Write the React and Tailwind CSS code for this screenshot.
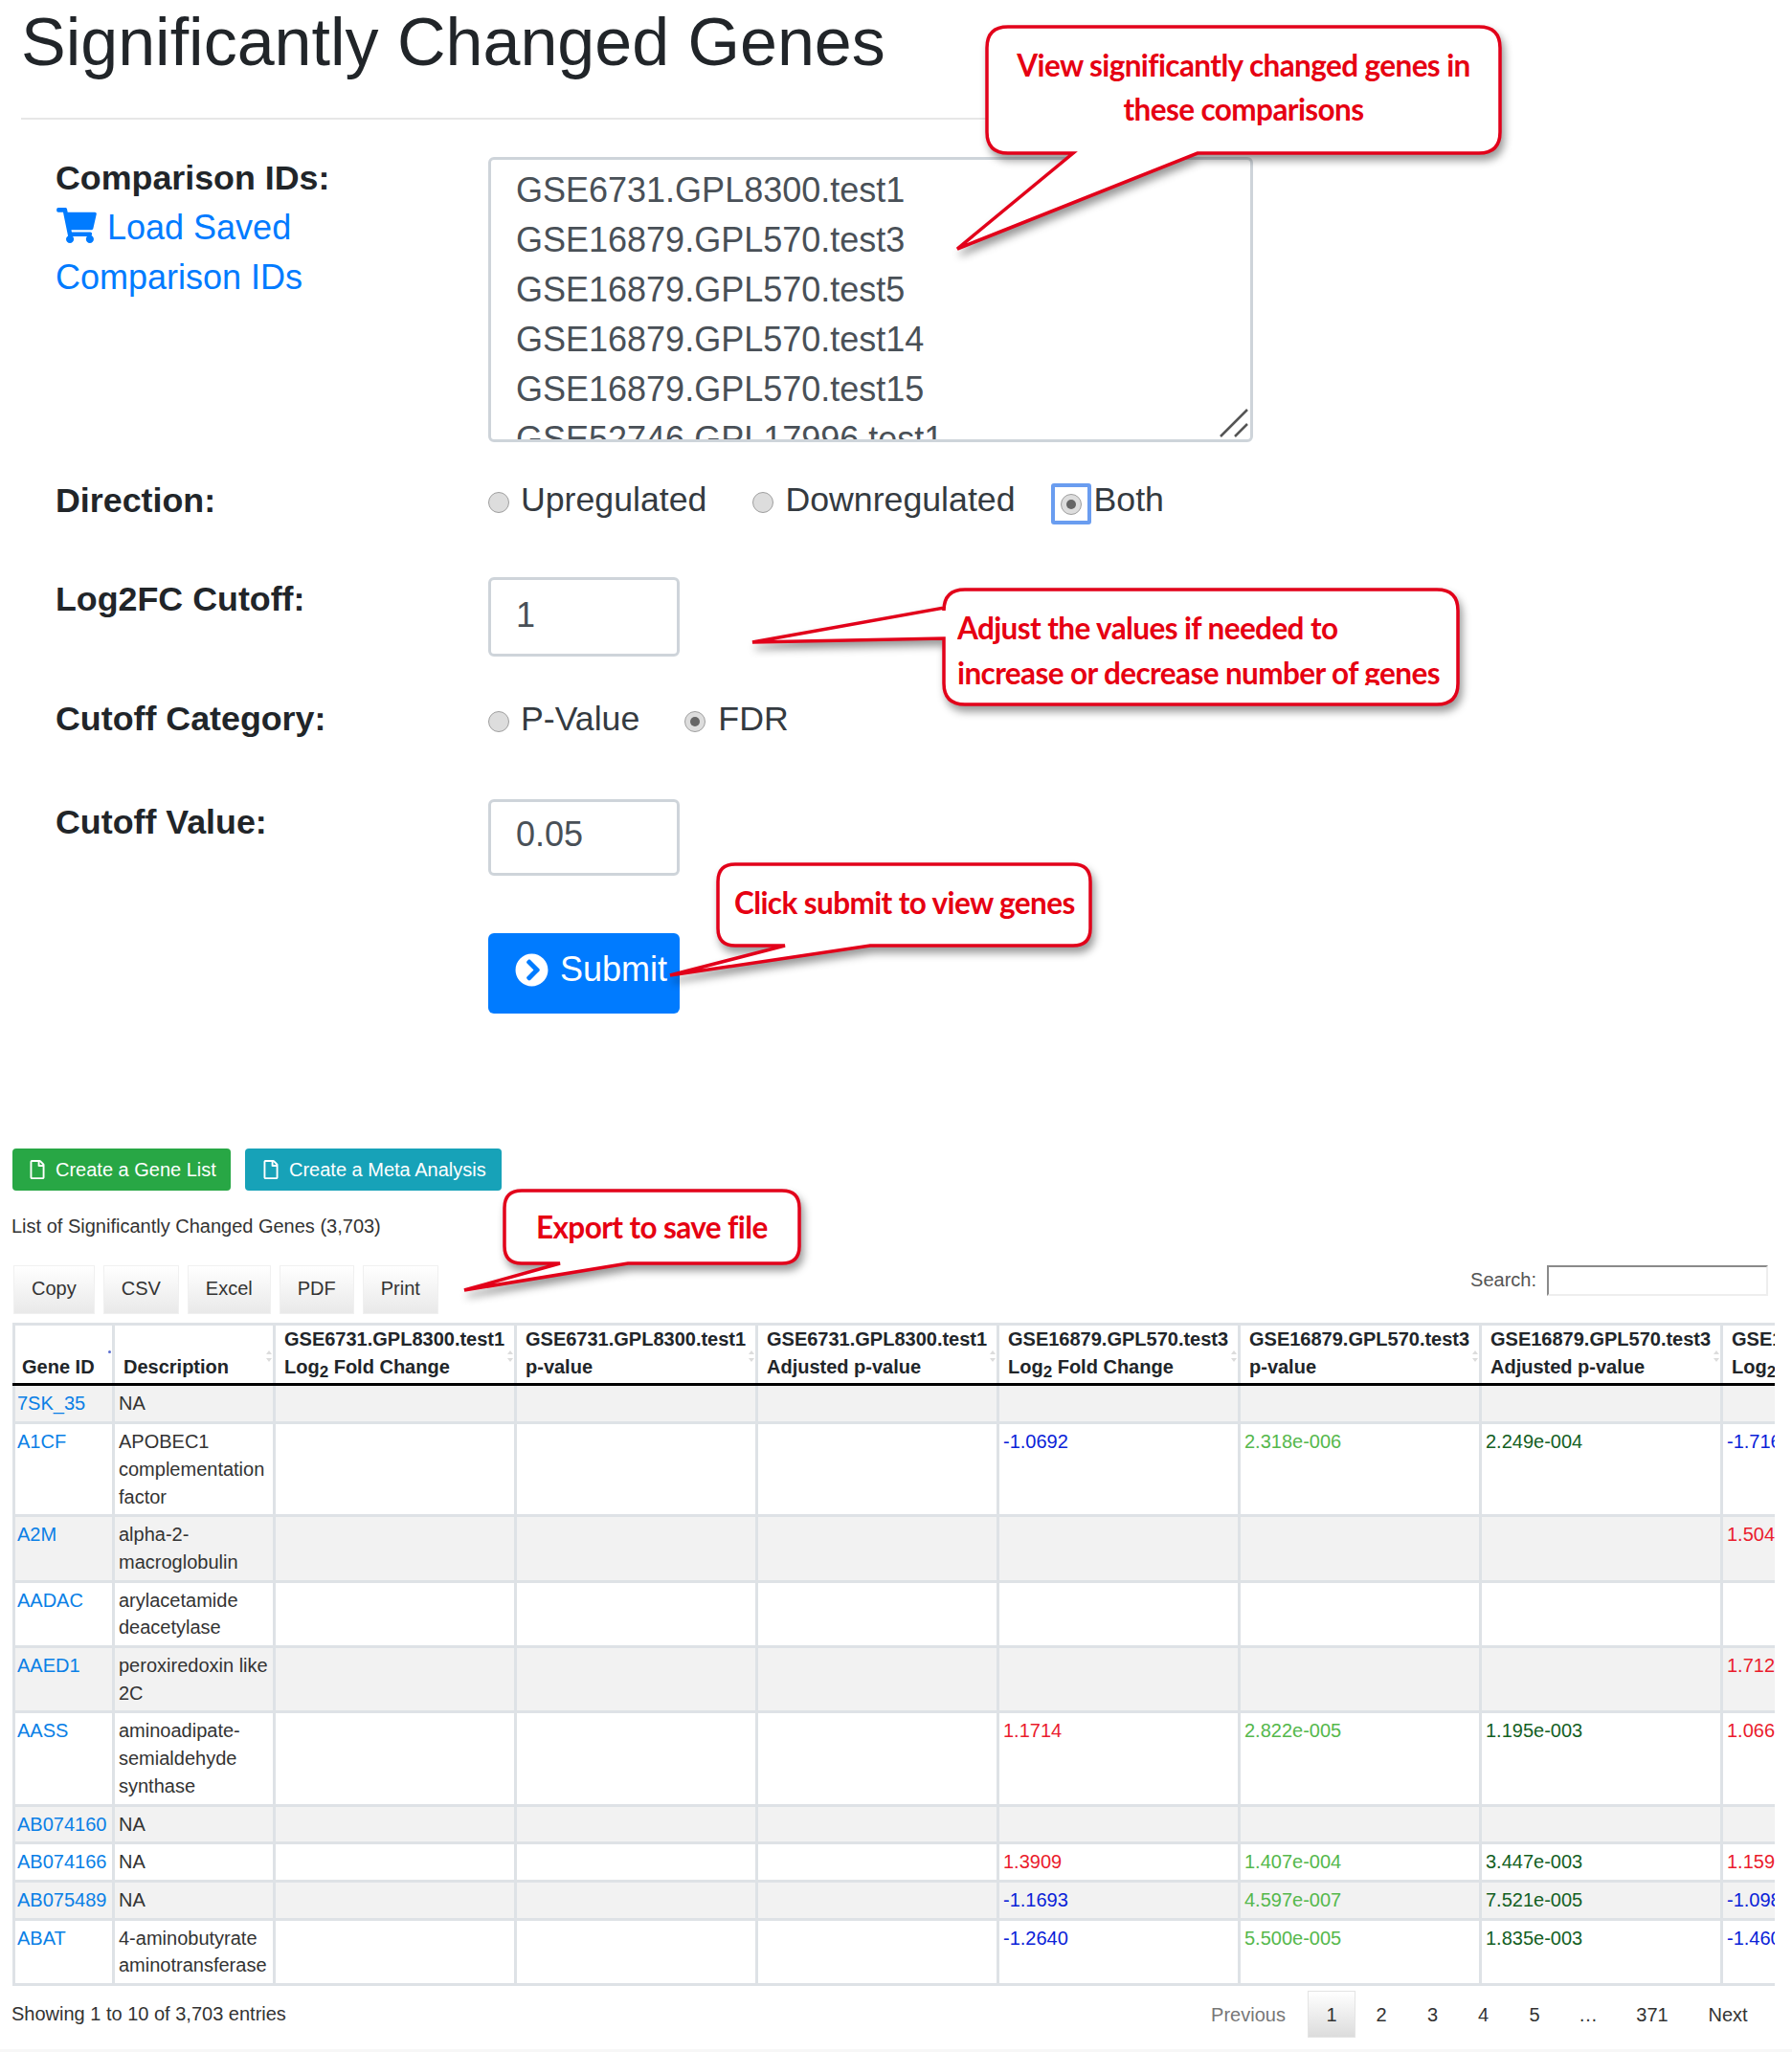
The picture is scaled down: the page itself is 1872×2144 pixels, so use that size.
import { FaShoppingCart, FaChevronCircleRight, FaRegFile } from 'react-icons/fa';

const comparisonIds = [
  'GSE6731.GPL8300.test1',
  'GSE16879.GPL570.test3',
  'GSE16879.GPL570.test5',
  'GSE16879.GPL570.test14',
  'GSE16879.GPL570.test15',
  'GSE52746.GPL17996.test1',
];

const BLUE = 'text-[#0a22d8]';
const RED = 'text-[#ea1c2c]';
const LIGHT = 'text-[#55b84c]';
const DARK = 'text-[#13601f]';

// logFC columns are coloured by direction
const fc = (value) => ({ value, color: value.startsWith('-') ? BLUE : RED });

const rows = [
  { id: '7SK_35', desc: 'NA' },
  { id: 'A1CF', desc: 'APOBEC1 complementation factor', lfc: fc('-1.0692'), p: '2.318e-006', adj: '2.249e-004', next: fc('-1.7160') },
  { id: 'A2M', desc: 'alpha-2-macroglobulin', next: fc('1.5042') },
  { id: 'AADAC', desc: 'arylacetamide deacetylase' },
  { id: 'AAED1', desc: 'peroxiredoxin like 2C', next: fc('1.7120') },
  { id: 'AASS', desc: 'aminoadipate-semialdehyde synthase', lfc: fc('1.1714'), p: '2.822e-005', adj: '1.195e-003', next: fc('1.0663') },
  { id: 'AB074160', desc: 'NA' },
  { id: 'AB074166', desc: 'NA', lfc: fc('1.3909'), p: '1.407e-004', adj: '3.447e-003', next: fc('1.1590') },
  { id: 'AB075489', desc: 'NA', lfc: fc('-1.1693'), p: '4.597e-007', adj: '7.521e-005', next: fc('-1.0981') },
  { id: 'ABAT', desc: '4-aminobutyrate aminotransferase', lfc: fc('-1.2640'), p: '5.500e-005', adj: '1.835e-003', next: fc('-1.4602') },
];

const columns = [
  ['GSE6731.GPL8300.test1', 'fold'],
  ['GSE6731.GPL8300.test1', 'p-value'],
  ['GSE6731.GPL8300.test1', 'Adjusted p-value'],
  ['GSE16879.GPL570.test3', 'fold'],
  ['GSE16879.GPL570.test3', 'p-value'],
  ['GSE16879.GPL570.test3', 'Adjusted p-value'],
  ['GSE16879.GPL570.test5', 'fold'],
];

const bubbleBottom = (l, t, r, b, a1, a2, tx, ty, rad = 22) =>
  `M${l + rad} ${t}H${r - rad}Q${r} ${t} ${r} ${t + rad}V${b - rad}Q${r} ${b} ${r - rad} ${b}H${a2}L${tx} ${ty}L${a1} ${b}H${l + rad}Q${l} ${b} ${l} ${b - rad}V${t + rad}Q${l} ${t} ${l + rad} ${t}Z`;

const bubbleLeft = (l, t, r, b, a1, a2, tx, ty, rad = 22) =>
  `M${l + rad} ${t}H${r - rad}Q${r} ${t} ${r} ${t + rad}V${b - rad}Q${r} ${b} ${r - rad} ${b}H${l + rad}Q${l} ${b} ${l} ${b - rad}V${a2}L${tx} ${ty}L${l} ${a1}V${t + rad}Q${l} ${t} ${l + rad} ${t}Z`;

function Callout({ className, viewBox, d, children }) {
  return (
    <div className={`absolute ${className}`}>
      <svg viewBox={viewBox} className="block w-full h-full overflow-visible drop-shadow-[3px_6px_4px_rgba(0,0,0,0.4)]">
        <path d={d} fill="#fff" stroke="#e2001a" strokeWidth="3.5" strokeLinejoin="miter" />
      </svg>
      {children}
    </div>
  );
}

function Radio({ checked }) {
  return (
    <span className="w-[22px] h-[22px] shrink-0 rounded-full border border-[#9f9f9f] bg-[#dddddd] flex items-center justify-center">
      {checked && <span className="w-[10px] h-[10px] rounded-full bg-[#666]" />}
    </span>
  );
}

function RadioSlot({ checked }) {
  return (
    <span className="mt-[14px]">
      <Radio checked={checked} />
    </span>
  );
}

function Label({ children, className = '' }) {
  return <div className={`font-bold text-[#212529] text-[35.8px] leading-[44px] ${className}`}>{children}</div>;
}

function SortMark() {
  return (
    <svg width="6" height="12" viewBox="0 0 6 12" className="absolute right-[1px] top-[26px]">
      <path d="M3 0L6 4H0Z M3 12L0 8H6Z" fill="#dcdcdc" />
    </svg>
  );
}

function Cell({ children, className = '', pad = 'pl-[4px]' }) {
  return <td className={`border-[3px] border-[#dee2e6] pr-[3px] py-[4px] align-top ${pad} ${className}`}>{children}</td>;
}

export default function App() {
  return (
    <main className="relative flex flex-col h-[2144px] overflow-hidden bg-white font-['Liberation_Sans',Arial,sans-serif] text-[#212529]">
      <h1 className="pl-[22px] h-[88px] text-[70px] leading-[88px] font-normal whitespace-nowrap">Significantly Changed Genes</h1>
      <div className="ml-[22px] mt-[35px] w-[1100px] h-[2px] bg-[#e7e7e7]" />

      {/* Search form */}
      <section className="mt-[39px] flex flex-col">
        <div className="flex">
          <div className="w-[510px] pl-[58px]">
            <Label>Comparison IDs:</Label>
            <div className="mt-[4px] w-[280px] text-[#007bff] text-[36px] leading-[52px]">
              <FaShoppingCart className="inline-block w-[42px] h-[37px] ml-[1px] mr-[11px] align-[-4px]" />
              Load Saved Comparison IDs
            </div>
          </div>
          <div className="relative w-[799px] h-[298px]">
            <textarea
              readOnly
              value={comparisonIds.join('\n')}
              className="block w-full h-full resize-none overflow-hidden rounded-md border-[3px] border-[#ced4da] pl-[26px] pt-[6px] text-[36px] leading-[52px] text-[#495057] outline-none"
            />
            <svg width="34" height="34" viewBox="0 0 34 34" className="absolute right-[3px] bottom-[3px]">
              <path d="M3 31L31 3M18 31L31 18" stroke="#555" strokeWidth="2.5" fill="none" />
            </svg>
          </div>
        </div>

        <div className="flex mt-[38px] h-[44px]">
          <Label className="w-[510px] pl-[58px] pt-[1px]">Direction:</Label>
          <div className="flex text-[35.7px] leading-[44px] text-[#343a40]">
            <span className="flex gap-[12px] mr-[48px]"><RadioSlot />Upregulated</span>
            <span className="flex gap-[12px] mr-[37px]"><RadioSlot />Downregulated</span>
            <span className="flex gap-[3px] items-start">
              <span className="w-[42px] h-[43px] mt-[5px] rounded-[3px] border-[4px] border-[#6a9df0] flex items-center justify-center">
                <Radio checked />
              </span>
              Both
            </span>
          </div>
        </div>

        <div className="flex mt-[59px] h-[83px]">
          <Label className="w-[510px] pl-[58px] pt-[1px]">Log2FC Cutoff:</Label>
          <input readOnly value="1" className="w-[200px] h-[83px] rounded-md border-[3px] border-[#ced4da] pl-[26px] pb-[4px] text-[36px] text-[#495057] outline-none" />
        </div>

        <div className="flex mt-[43px] h-[44px]">
          <Label className="w-[510px] pl-[58px]">Cutoff Category:</Label>
          <div className="flex text-[35.7px] leading-[44px] text-[#343a40]">
            <span className="flex gap-[12px] mr-[47px]"><RadioSlot />P-Value</span>
            <span className="flex gap-[13px]"><RadioSlot checked />FDR</span>
          </div>
        </div>

        <div className="flex mt-[62px] h-[80px]">
          <Label className="w-[510px] pl-[58px] pt-[2px]">Cutoff Value:</Label>
          <input readOnly value="0.05" className="w-[200px] h-[80px] rounded-md border-[3px] border-[#ced4da] pl-[26px] pb-[6px] text-[36px] text-[#495057] outline-none" />
        </div>

        <div className="mt-[60px] ml-[510px] w-[200px] h-[84px] rounded-md bg-[#007bff] text-white text-[36px] flex items-center gap-[12px] pl-[28px] pb-[8px]">
          <FaChevronCircleRight className="w-[35px] h-[35px]" />
          Submit
        </div>
      </section>

      {/* Results */}
      <section className="mt-[141px] flex flex-col text-[20px]">
        <div className="flex gap-[15px] pl-[13px]">
          <button className="h-[44px] w-[228px] rounded bg-[#28a745] text-white flex items-center gap-[11px] pl-[18px]">
            <FaRegFile className="w-[16px] h-[20px]" />
            Create a Gene List
          </button>
          <button className="h-[44px] w-[268px] rounded bg-[#17a2b8] text-white flex items-center gap-[11px] pl-[19px]">
            <FaRegFile className="w-[16px] h-[20px]" />
            Create a Meta Analysis
          </button>
        </div>

        <p className="mt-[22px] pl-[12px] h-[30px] leading-[30px] text-[#333]">List of Significantly Changed Genes (3,703)</p>

        <div className="mt-[26px] flex items-start justify-between pl-[14px] pr-[25px] h-[51px]">
          <div className="flex gap-[9px]">
            {['Copy', 'CSV', 'Excel', 'PDF', 'Print'].map((label) => (
              <button key={label} className="h-[51px] px-[18px] pb-[3px] border border-[#f0f0f0] bg-gradient-to-b from-white to-[#e9e9e9] text-[#333]">
                {label}
              </button>
            ))}
          </div>
          <label className="flex items-start gap-[11px] text-[#555]">
            Search:
            <input readOnly className="w-[231px] h-[32px] border-2 border-t-[#8a8a8a] border-l-[#8a8a8a] border-r-[#eeeeee] border-b-[#eeeeee]" />
          </label>
        </div>

        <div className="mt-[9px] ml-[13px] w-[1841px] overflow-hidden">
          <table className="table-fixed border-collapse w-[2036px] text-[20px] leading-[28.7px]">
            <colgroup>
              <col className="w-[104px]" />
              <col className="w-[168px]" />
              {columns.map((_, i) => <col key={i} className="w-[252px]" />)}
            </colgroup>
            <thead>
              <tr className="border-b-[3px] border-b-black">
                <th className="relative border-[3px] border-[#dee2e6] border-b-black px-[7px] pt-0 pb-[3px] text-left align-bottom">
                  Gene ID
                  <span className="absolute right-[1px] top-[26px] w-[3px] h-[3px] rounded-full bg-[#5b6fd0]" />
                </th>
                <th className="relative border-[3px] border-[#dee2e6] border-b-black pl-[9px] pr-[3px] pt-0 pb-[3px] text-left align-bottom">
                  Description
                  <SortMark />
                </th>
                {columns.map(([name, kind], i) => (
                  <th key={i} className="relative border-[3px] border-[#dee2e6] border-b-black pl-[9px] pr-0 pt-0 pb-[3px] text-left align-bottom whitespace-nowrap">
                    {name}
                    <br />
                    {kind === 'fold' ? <>Log<sub className="text-[17px]">2</sub> Fold Change</> : kind}
                    <SortMark />
                  </th>
                ))}
              </tr>
            </thead>
            <tbody>
              {rows.map((row, i) => (
                <tr key={row.id} className={i % 2 === 0 ? 'bg-[#f2f2f2]' : 'bg-white'}>
                  <Cell pad="pl-[2px]" className="text-[#0a7fe6]">{row.id}</Cell>
                  <Cell className="text-[#333]">{row.desc}</Cell>
                  <Cell />
                  <Cell />
                  <Cell />
                  <Cell className={row.lfc?.color}>{row.lfc?.value}</Cell>
                  <Cell className={LIGHT}>{row.p}</Cell>
                  <Cell className={DARK}>{row.adj}</Cell>
                  <Cell className={`whitespace-nowrap ${row.next?.color ?? ''}`}>{row.next?.value}</Cell>
                </tr>
              ))}
            </tbody>
          </table>
        </div>

        <div className="mt-[5px] flex items-center justify-between pl-[12px] pr-[26px] text-[#333]">
          <span className="pb-[2px]">Showing 1 to 10 of 3,703 entries</span>
          <nav className="flex h-[49px] items-center text-center">
            <span className="w-[124px] text-[#777]">Previous</span>
            <span className="w-[50px] h-[49px] leading-[49px] border border-[#e4e4e4] bg-gradient-to-b from-white to-[#dcdcdc]">1</span>
            <span className="w-[54px]">2</span>
            <span className="w-[53px]">3</span>
            <span className="w-[53px]">4</span>
            <span className="w-[54px]">5</span>
            <span className="w-[58px]">…</span>
            <span className="w-[76px]">371</span>
            <span className="w-[82px]">Next</span>
          </nav>
        </div>
      </section>

      <div className="mt-auto h-[3px] bg-[#f7f7f7]" />

      {/* Annotations drawn over the page */}
      <Callout
        className="left-[990px] top-[20px] w-[590px] h-[250px]"
        viewBox="990 20 590 250"
        d={bubbleBottom(1031, 28, 1567, 160, 1121, 1251, 1000, 260)}
      >
        <div className="absolute left-[41px] top-[25px] w-[536px] text-center font-['Lato',sans-serif] font-bold text-[#e60012] text-[31.5px] leading-[46px] tracking-[-0.6px]">
          View significantly changed genes in
          <br />
          these comparisons
        </div>
      </Callout>

      <Callout
        className="left-[780px] top-[610px] w-[750px] h-[135px]"
        viewBox="780 610 750 135"
        d={bubbleLeft(986, 616, 1523, 736, 635, 667, 786, 671)}
      >
        <div className="absolute left-[220px] top-[23px] h-[83px] overflow-hidden whitespace-nowrap font-['Lato',sans-serif] font-bold text-[#e60012] text-[31.5px] leading-[47px] tracking-[-0.6px]">
          Adjust the values if needed to
          <br />
          increase or decrease number of genes
        </div>
      </Callout>

      <Callout
        className="left-[695px] top-[895px] w-[450px] h-[130px]"
        viewBox="695 895 450 130"
        d={bubbleBottom(750, 903, 1139, 988, 820, 909, 700, 1019, 18)}
      >
        <div className="absolute left-[72px] top-[25px] whitespace-nowrap font-['Lato',sans-serif] font-bold text-[#e60012] text-[31.5px] leading-[46px] tracking-[-0.6px]">
          Click submit to view genes
        </div>
      </Callout>

      <Callout
        className="left-[480px] top-[1238px] w-[360px] h-[115px]"
        viewBox="480 1238 360 115"
        d={bubbleBottom(527, 1244, 835, 1320, 585, 656, 485, 1348, 18)}
      >
        <div className="absolute left-[80px] top-[21px] whitespace-nowrap font-['Lato',sans-serif] font-bold text-[#e60012] text-[31.5px] leading-[46px] tracking-[-0.6px]">
          Export to save file
        </div>
      </Callout>
    </main>
  );
}
